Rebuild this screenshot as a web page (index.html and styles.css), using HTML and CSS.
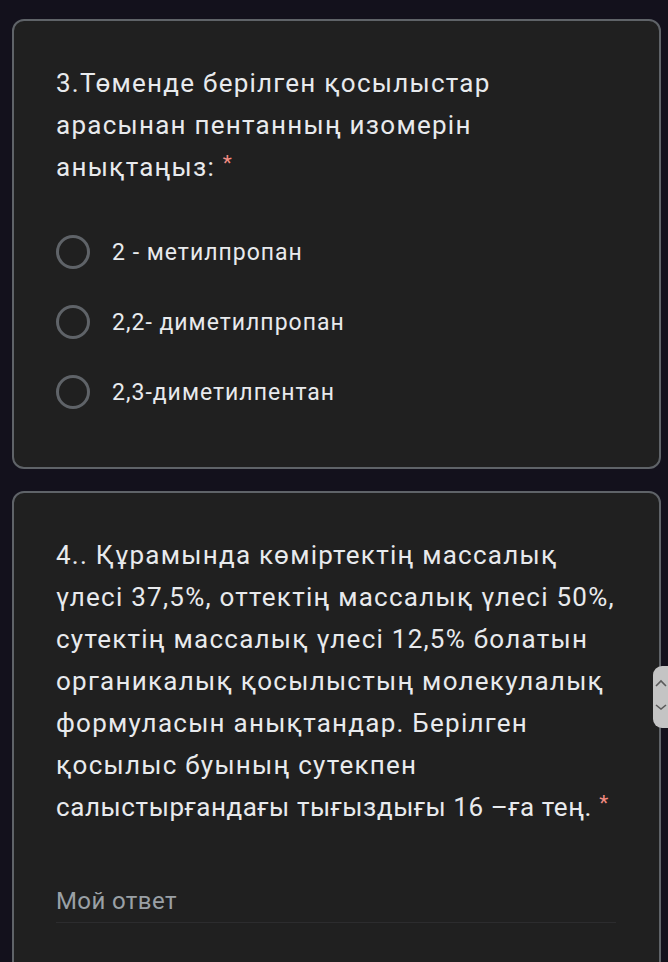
FILE: index.html
```html
<!DOCTYPE html>
<html lang="kk">
<head>
<meta charset="utf-8">
<title>Форма</title>
<link rel="stylesheet" href="styles.css">
</head>
<body>
<main class="page">
  <section class="card">
    <h2 class="q-title">3.Төменде берілген қосылыстар арасынан пентанның изомерін <span class="nowrap">анықтаңыз: <span class="req">*</span></span></h2>
    <div class="options">
      <label class="option"><span class="radio"></span><span class="opt-text">2 - метилпропан</span></label>
      <label class="option"><span class="radio"></span><span class="opt-text">2,2- диметилпропан</span></label>
      <label class="option"><span class="radio"></span><span class="opt-text">2,3-диметилпентан</span></label>
    </div>
  </section>
  <section class="card card-open">
    <h2 class="q-title">4.. Құрамында көміртектің массалық үлесі 37,5%, оттектің массалық үлесі 50%, сутектің массалық үлесі 12,5% болатын органикалық қосылыстың молекулалық формуласын анықтандар. Берілген қосылыс буының сутекпен <span class="nowrap tight">салыстырғандағы тығыздығы 16 –ға тең. <span class="req">*</span></span></h2>
    <div class="answer">Мой ответ</div>
  </section>
</main>
<div class="scroll-handle">
  <svg width="14" height="44" viewBox="0 0 14 44" aria-hidden="true">
    <path d="M3 20 L8 15 L13 20" fill="none" stroke="#5a5a5a" stroke-width="1.6"/>
    <path d="M3 39 L8 43 L13 39" fill="none" stroke="#5a5a5a" stroke-width="1.6"/>
  </svg>
</div>
</body>
</html>
```
FILE: styles.css
```css
html, body {
  margin: 0;
  padding: 0;
  background: #13111c;
  height: 100%;
  overflow: hidden;
}

body {
  font-family: Roboto, "Noto Sans", "Liberation Sans", sans-serif;
  color: #e8eaed;
}

.page {
  display: flex;
  flex-direction: column;
  gap: 22px;
  padding: 19px 7px 0 12px;
}

.card {
  background: #202020;
  border: 2px solid #5f6368;
  border-radius: 12px;
  padding: 41px 36px 40px 42px;
}

.card-open {
  padding-bottom: 140px;
}

.q-title {
  margin: 0;
  font-size: 26px;
  font-weight: 400;
  line-height: 42px;
  letter-spacing: 1.25px;
  color: #e8eaed;
}

.nowrap {
  white-space: nowrap;
}

.tight {
  letter-spacing: 0.6px;
}

.req {
  color: #f28b82;
  font-size: 21px;
  line-height: 1;
  vertical-align: 6px;
  letter-spacing: 0;
}

.options {
  display: flex;
  flex-direction: column;
  margin-top: 29px;
}

.option {
  display: flex;
  align-items: center;
  height: 70px;
  gap: 22px;
}

.radio {
  width: 28px;
  height: 28px;
  border: 3.5px solid #5f6368;
  border-radius: 50%;
  flex: none;
}

.opt-text {
  font-size: 23px;
  letter-spacing: 1px;
  color: #e8eaed;
}

.answer {
  margin-top: 58px;
  margin-right: 7px;
  font-size: 24px;
  letter-spacing: 0.4px;
  line-height: 30px;
  color: #9aa0a6;
  padding-bottom: 6px;
  border-bottom: 1.5px solid #2c2c2e;
}

.scroll-handle {
  position: fixed;
  left: 653px;
  top: 666px;
  width: 24px;
  height: 62px;
  background: #c4c4c4;
  border-radius: 9px;
  display: flex;
}
```
